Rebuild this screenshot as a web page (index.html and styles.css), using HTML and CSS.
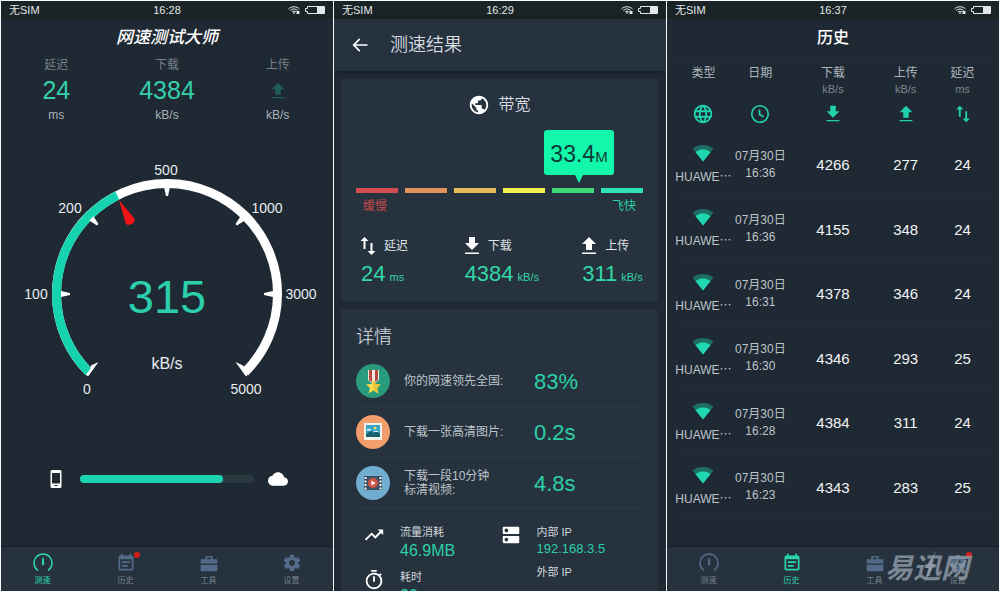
FILE: index.html
```html
<!DOCTYPE html>
<html lang="zh-CN">
<head>
<meta charset="utf-8">
<title>网速测试大师</title>
<meta name="viewport" content="width=device-width, initial-scale=1">
<link rel="stylesheet" href="styles.css">
</head>
<body>
<svg class="sprite" aria-hidden="true">
  <symbol id="i-wifi" viewBox="0 0 24 16"><g fill="none" stroke="currentColor" stroke-width="2"><path d="M1 6C7 0 17 0 23 6M4.500 9C9 5 15 5 19.500 9M8 12c2.500-2 5.500-2 8 0"/></g><path d="M12 16l-2.500-2.500q2.500-1.800 5 0zM17 10h6v6h-6z"/></symbol>
  <symbol id="i-battery" viewBox="0 0 20 8"><path d="M2.500.5h17v7h-17v-2h-2v-3h2z" fill="none" stroke="currentColor"/><path d="M12 1h7.500v6H12z"/></symbol>
  <symbol id="i-up" viewBox="0 0 24 24"><path d="M9 16h6v-6h4l-7-7-7 7h4zM5 18.500h14V20H5z"/></symbol>
  <symbol id="i-down" viewBox="0 0 24 24"><path d="M19 9h-4V3H9v6H5l7 7zM5 18.500V20h14v-1.500z"/></symbol>
  <symbol id="i-swap" viewBox="0 0 24 24"><path d="M16.500 17.010V9h-2v8.010h-3L15.500 21l4-3.990zM8.500 3l-4 3.990h3V15h2V6.990h3z"/></symbol>
  <symbol id="i-phone" viewBox="0 0 12 18"><path fill-rule="evenodd" d="M2 0h8a1.500 1.500 0 0 1 1.500 1.500v15A1.500 1.500 0 0 1 10 18H2a1.500 1.500 0 0 1-1.500-1.500v-15A1.500 1.500 0 0 1 2 0zM2 3v10.500h8V3zM4.500 15v1h3v-1z"/></symbol>
  <symbol id="i-cloud" viewBox="0 0 24 24"><path d="M19.350 10.040C18.670 6.590 15.640 4 12 4 9.110 4 6.600 5.640 5.350 8.040 2.340 8.360 0 10.910 0 14c0 3.310 2.690 6 6 6h13c2.760 0 5-2.240 5-5 0-2.640-2.050-4.780-4.650-4.960z"/></symbol>
  <symbol id="i-gauge" viewBox="0 0 20 20"><path d="M5 17.500A9 9 0 1 1 15 17.500" fill="none" stroke="currentColor" stroke-width="1.500"/><path d="M9.200 5h1.600l.4 6a1.200 1.200 0 0 1-2.400 0z"/></symbol>
  <symbol id="i-note" viewBox="0 0 24 24"><path d="M19 3h-1V1h-2v2H8V1H6v2H5c-1.110 0-2 .9-2 2v14c0 1.100.89 2 2 2h14c1.100 0 2-.9 2-2V5c0-1.100-.9-2-2-2zm0 16H5V7.500h14zM7 10h10v2H7zM7 14.500h7v2H7z"/></symbol>
  <symbol id="i-case" viewBox="0 0 24 24"><path fill-rule="evenodd" d="M2 7.500h5.500V5A1.500 1.500 0 0 1 9 3.500h6A1.500 1.500 0 0 1 16.500 5v2.500H22v5H2zM9.500 5.500v2h5v-2zM2 14h20v8H2z"/></symbol>
  <symbol id="i-gear" viewBox="0 0 24 24"><path d="M19.430 12.980c.04-.32.07-.64.07-.98s-.03-.66-.07-.98l2.110-1.650c.19-.15.24-.42.12-.64l-2-3.460c-.12-.22-.39-.3-.61-.22l-2.490 1c-.52-.4-1.080-.73-1.690-.98l-.38-2.650C14.460 2.180 14.250 2 14 2h-4c-.25 0-.46.18-.49.42l-.38 2.650c-.61.25-1.170.59-1.690.98l-2.490-1c-.23-.09-.49 0-.61.22l-2 3.460c-.13.22-.07.49.12.64l2.110 1.650c-.04.32-.07.65-.07.98s.03.66.07.98l-2.110 1.650c-.19.15-.24.42-.12.64l2 3.460c.12.22.39.3.61.22l2.490-1c.52.4 1.080.73 1.690.98l.38 2.650c.03.24.24.42.49.42h4c.25 0 .46-.18.49-.42l.38-2.650c.61-.25 1.170-.59 1.690-.98l2.490 1c.23.09.49 0 .61-.22l2-3.460c.12-.22.07-.49-.12-.64zM12 15.500c-1.930 0-3.500-1.570-3.500-3.500s1.570-3.500 3.500-3.500 3.500 1.570 3.500 3.500-1.570 3.500-3.500 3.500z"/></symbol>
  <symbol id="i-back" viewBox="0 0 24 24"><path d="M21 11H6.830l5.590-5.590L11 4l-8 8 8 8 1.410-1.410L6.830 13H21z"/></symbol>
  <symbol id="i-earth" viewBox="0 0 24 24"><path d="M12 2C6.480 2 2 6.480 2 12s4.480 10 10 10 10-4.480 10-10S17.520 2 12 2zm-1 17.930c-3.950-.49-7-3.850-7-7.930 0-.62.08-1.210.21-1.790L9 15v1c0 1.100.9 2 2 2zm6.900-2.540c-.26-.81-1-1.390-1.900-1.390h-1v-3c0-.55-.45-1-1-1H8v-2h2c.55 0 1-.45 1-1V7h2c1.100 0 2-.9 2-2v-.41c2.930 1.190 5 4.060 5 7.410 0 2.080-.8 3.970-2.100 5.390z"/></symbol>
  <symbol id="i-globe" viewBox="0 0 24 24"><path d="M12 2C6.470 2 2 6.480 2 12s4.470 10 10 10 10-4.480 10-10S17.520 2 12 2zm6.920 6h-2.950c-.32-1.250-.78-2.450-1.380-3.560 1.840.63 3.370 1.910 4.330 3.560zM12 4.040c.83 1.200 1.480 2.530 1.910 3.960h-3.820c.43-1.430 1.080-2.760 1.910-3.960zM4.260 14C4.100 13.360 4 12.690 4 12s.1-1.360.26-2h3.380c-.08.66-.14 1.320-.14 2s.06 1.340.14 2zm.82 2h2.950c.32 1.250.78 2.450 1.380 3.560-1.840-.63-3.370-1.900-4.330-3.560zm2.950-8H5.080c.96-1.660 2.490-2.930 4.330-3.560C8.810 5.550 8.350 6.750 8.030 8zM12 19.960c-.83-1.200-1.480-2.530-1.910-3.960h3.820c-.43 1.430-1.080 2.760-1.910 3.960zM14.340 14H9.660c-.09-.66-.16-1.320-.16-2s.07-1.350.16-2h4.680c.09.65.16 1.320.16 2s-.07 1.340-.16 2zm.25 5.560c.6-1.110 1.060-2.310 1.380-3.560h2.950c-.96 1.650-2.490 2.930-4.330 3.560zM16.360 14c.08-.66.14-1.320.14-2s-.06-1.340-.14-2h3.380c.16.64.26 1.310.26 2s-.1 1.360-.26 2z"/></symbol>
  <symbol id="i-clock" viewBox="0 0 24 24"><path d="M12 3a9 9 0 1 0 0 18 9 9 0 0 0 0-18zM11.500 7v5.500l4.500 2.500" fill="none" stroke="currentColor" stroke-width="1.800"/></symbol>
  <symbol id="i-signal" viewBox="0 0 24 20"><path opacity=".4" d="M12 19.500L23.640 5C23.190 4.660 18.710 1 12 1S.81 4.660.36 5z"/><path d="M3.530 9L12 19.500 20.470 9C20.040 8.620 16.810 6 12 6S3.960 8.620 3.530 9z"/></symbol>
  <symbol id="i-trend" viewBox="0 0 24 24"><path d="M16 6l2.290 2.290-4.880 4.880-4-4L2 16.590 3.410 18l6-6 4 4 6.300-6.290L22 12V6z"/></symbol>
  <symbol id="i-server" viewBox="0 0 24 24"><path d="M20 13H4c-.55 0-1 .45-1 1v6c0 .55.45 1 1 1h16c.55 0 1-.45 1-1v-6c0-.55-.45-1-1-1zM7 19c-1.100 0-2-.9-2-2s.9-2 2-2 2 .9 2 2-.9 2-2 2zM20 3H4c-.55 0-1 .45-1 1v6c0 .55.45 1 1 1h16c.55 0 1-.45 1-1V4c0-.55-.45-1-1-1zM7 9c-1.100 0-2-.9-2-2s.9-2 2-2 2 .9 2 2-.9 2-2 2z"/></symbol>
  <symbol id="i-timer" viewBox="0 0 24 24"><path d="M15 1H9v2h6zm-4 13h2V8h-2zm8.030-6.610l1.420-1.420c-.43-.51-.9-.99-1.410-1.410l-1.420 1.420C16.070 4.740 14.120 4 12 4c-4.970 0-9 4.030-9 9s4.020 9 9 9 9-4.030 9-9c0-2.120-.74-4.070-1.970-5.610zM12 20c-3.870 0-7-3.130-7-7s3.130-7 7-7 7 3.130 7 7-3.130 7-7 7z"/></symbol>
</svg>

<main class="screens">
  <section class="phone">
    <div class="status"><span>无SIM</span><time>16:28</time><span class="status-icons"><svg class="wifi"><use href="#i-wifi"/></svg><svg class="battery"><use href="#i-battery"/></svg></span></div>
    <h1 class="bar-title bar-title--brand">网速测试大师</h1>
    <dl class="stats">
      <div class="stat"><dt>延迟</dt><dd class="stat-value">24</dd><dd class="stat-unit">ms</dd></div>
      <div class="stat"><dt>下载</dt><dd class="stat-value">4384</dd><dd class="stat-unit">kB/s</dd></div>
      <div class="stat"><dt>上传</dt><dd class="stat-value stat-value--pending"><svg class="icon-22"><use href="#i-up"/></svg></dd><dd class="stat-unit">kB/s</dd></div>
    </dl>
    <svg class="gauge" viewBox="0 0 332 260" role="img" aria-label="315 kB/s">
      <path class="gauge-track" d="M87.900 222.100A110.500 110.500 0 1 1 244.100 222.100"/>
      <path class="gauge-fill" d="M87.900 222.100A110.500 110.500 0 0 1 116.200 45.400"/>
      <g fill="#fff">
        <path d="M60 141l9 2v2l-9 2zM272 141l-9 2v2l9 2zM163 37h6l-2 9h-2z"/>
        <path d="M163 37h6l-2 9h-2z" transform="rotate(45 166 144)"/>
        <path d="M163 37h6l-2 9h-2z" transform="rotate(-45 166 144)"/>
        <path d="M97.500 212l-10.500 14.500-2-2 4-5 1-4zM234.500 212l10.500 14.500 3-3-6-8z"/>
      </g>
      <path d="M118 50l15 18q2 3-2 6l-4 1q-3-1-3-4z" fill="#f21414"/>
      <g class="gauge-label">
        <text x="86" y="244">0</text><text x="35" y="149">100</text><text x="69" y="63">200</text><text x="165" y="25">500</text><text x="266" y="63">1000</text><text x="300" y="149">3000</text><text x="245" y="244">5000</text>
      </g>
      <text class="gauge-value" x="166" y="163">315</text>
      <text class="gauge-unit" x="166" y="219">kB/s</text>
    </svg>
    <div class="transfer">
      <svg class="device"><use href="#i-phone"/></svg>
      <div class="progress" role="progressbar" aria-label="传输" aria-valuenow="82"><div class="progress-fill" style="width:82%"></div></div>
      <svg class="icon-20"><use href="#i-cloud"/></svg>
    </div>
    <nav class="tabs">
      <button class="tab tab--on" type="button"><span class="tab-icon"><svg><use href="#i-gauge"/></svg></span>测速</button>
      <button class="tab" type="button"><span class="tab-icon"><svg><use href="#i-note"/></svg><i class="dot"></i></span>历史</button>
      <button class="tab" type="button"><span class="tab-icon"><svg><use href="#i-case"/></svg></span>工具</button>
      <button class="tab" type="button"><span class="tab-icon"><svg><use href="#i-gear"/></svg></span>设置</button>
    </nav>
  </section>

  <section class="phone">
    <div class="status"><span>无SIM</span><time>16:29</time><span class="status-icons"><svg class="wifi"><use href="#i-wifi"/></svg><svg class="battery"><use href="#i-battery"/></svg></span></div>
    <header class="appbar"><button class="back" type="button" aria-label="返回"><svg class="icon-20"><use href="#i-back"/></svg></button><h1>测速结果</h1></header>
    <div class="cards">
      <section class="card">
        <h2 class="card-head"><svg class="icon-22"><use href="#i-earth"/></svg>带宽</h2>
        <div class="scale">
          <span class="seg seg--1"></span><span class="seg seg--2"></span><span class="seg seg--3"></span><span class="seg seg--4"></span>
          <span class="seg seg--5"><strong class="bubble">33.4<small>M</small></strong></span><span class="seg seg--6"></span>
        </div>
        <div class="scale-ends"><span class="slow">缓慢</span><span class="fast">飞快</span></div>
        <dl class="metrics">
          <div class="metric"><dt><svg><use href="#i-swap"/></svg>延迟</dt><dd>24<small>ms</small></dd></div>
          <div class="metric"><dt><svg><use href="#i-down"/></svg>下载</dt><dd>4384<small>kB/s</small></dd></div>
          <div class="metric"><dt><svg><use href="#i-up"/></svg>上传</dt><dd>311<small>kB/s</small></dd></div>
        </dl>
      </section>
      <section class="card card--details">
        <h2>详情</h2>
        <div class="fact">
          <svg class="badge" viewBox="0 0 34 34"><circle cx="17" cy="17" r="17" fill="#279b7c"/><path d="M12 6h11v10l-5.500 4L12 16z" fill="#f3e8e2"/><path d="M13 6h3v12l-3-2zM19 6h3v10l-3 2z" fill="#b9483f"/><path d="M17.500 15l2 5 5 .5-3.500 3.500 1.500 5.500-5-3-5 3L14 24l-4-3.500 5.500-.5z" fill="#fadd4b"/><path d="M17.500 15l2 5 5 .5-3.500 3.500 1.500 5.500-5-3z" fill="#e9c53a"/></svg>
          <p>你的网速领先全国:</p><output>83%</output>
        </div>
        <div class="fact">
          <svg class="badge" viewBox="0 0 34 34"><circle cx="17" cy="17" r="17" fill="#f29e6c"/><path d="M8 8h18v17H8z" fill="#f6f3ec"/><path d="M10 10h14v12H10z" fill="#38a5c6"/><path d="M10 19l5-3 3 2 3-2 3 3v3H10z" fill="#185f70"/><circle cx="19" cy="13" r="1.500" fill="#f3e16c"/><path d="M11 14h4v1.500h-4zM18 16h4v1h-4z" fill="#e9f5f5"/></svg>
          <p>下载一张高清图片:</p><output>0.2s</output>
        </div>
        <div class="fact">
          <svg class="badge" viewBox="0 0 34 34"><circle cx="17" cy="17" r="17" fill="#71add1"/><path d="M8 10h18v14H8z" fill="#34495c"/><path d="M9.500 11v13M24.500 11v13" stroke="#fff" stroke-width="2" stroke-dasharray="2 1.500"/><path d="M11.500 10.500h11v13h-11z" fill="#3e5367"/><circle cx="17" cy="17" r="5" fill="#cf5347"/><path d="M15.500 14.500l4 2.500-4 2.500z" fill="#fff"/></svg>
          <p>下载一段10分钟<br>标清视频:</p><output>4.8s</output>
        </div>
        <div class="extras">
          <div class="extra-column">
            <div class="extra"><svg class="icon-22"><use href="#i-trend"/></svg><dl><dt>流量消耗</dt><dd>46.9MB</dd></dl></div>
            <div class="extra"><svg class="icon-22"><use href="#i-timer"/></svg><dl><dt>耗时</dt><dd>20s</dd></dl></div>
          </div>
          <div class="extra extra--ip"><svg class="icon-22"><use href="#i-server"/></svg><dl><dt>内部 IP</dt><dd>192.168.3.5</dd><dt>外部 IP</dt></dl></div>
        </div>
      </section>
    </div>
  </section>

  <section class="phone">
    <div class="status"><span>无SIM</span><time>16:37</time><span class="status-icons"><svg class="wifi"><use href="#i-wifi"/></svg><svg class="battery"><use href="#i-battery"/></svg></span></div>
    <h1 class="bar-title">历史</h1>
    <div class="log">
      <table>
        <colgroup><col class="c-type"><col class="c-date"><col class="c-down"><col class="c-up"><col class="c-ping"></colgroup>
        <thead><tr>
          <th scope="col">类型<small>&nbsp;</small><svg><use href="#i-globe"/></svg></th>
          <th scope="col">日期<small>&nbsp;</small><svg><use href="#i-clock"/></svg></th>
          <th scope="col">下载<small>kB/s</small><svg><use href="#i-down"/></svg></th>
          <th scope="col">上传<small>kB/s</small><svg><use href="#i-up"/></svg></th>
          <th scope="col">延迟<small>ms</small><svg><use href="#i-swap"/></svg></th>
        </tr></thead>
        <tbody>
          <tr><td class="net"><svg><use href="#i-signal"/></svg>HUAWE<span class="more">…</span></td><td class="when">07月30日<br>16:36</td><td>4266</td><td>277</td><td>24</td></tr>
          <tr><td class="net"><svg><use href="#i-signal"/></svg>HUAWE<span class="more">…</span></td><td class="when">07月30日<br>16:36</td><td>4155</td><td>348</td><td>24</td></tr>
          <tr><td class="net"><svg><use href="#i-signal"/></svg>HUAWE<span class="more">…</span></td><td class="when">07月30日<br>16:31</td><td>4378</td><td>346</td><td>24</td></tr>
          <tr><td class="net"><svg><use href="#i-signal"/></svg>HUAWE<span class="more">…</span></td><td class="when">07月30日<br>16:30</td><td>4346</td><td>293</td><td>25</td></tr>
          <tr><td class="net"><svg><use href="#i-signal"/></svg>HUAWE<span class="more">…</span></td><td class="when">07月30日<br>16:28</td><td>4384</td><td>311</td><td>24</td></tr>
          <tr><td class="net"><svg><use href="#i-signal"/></svg>HUAWE<span class="more">…</span></td><td class="when">07月30日<br>16:23</td><td>4343</td><td>283</td><td>25</td></tr>
        </tbody>
      </table>
    </div>
    <nav class="tabs">
      <button class="tab" type="button"><span class="tab-icon"><svg><use href="#i-gauge"/></svg></span>测速</button>
      <button class="tab tab--on" type="button"><span class="tab-icon"><svg><use href="#i-note"/></svg></span>历史</button>
      <button class="tab" type="button"><span class="tab-icon"><svg><use href="#i-case"/></svg></span>工具</button>
      <button class="tab" type="button"><span class="tab-icon"><svg><use href="#i-gear"/></svg><i class="dot"></i></span>设置</button>
    </nav>
    <div class="watermark">易迅网<svg viewBox="0 0 16 34"><path d="M14 1L3 18h4L2 33 13 14H9z"/></svg></div>
  </section>
</main>
</body>
</html>
```
FILE: styles.css
```css
:root {
  --bg: #1f2933;
  --panel: #26323e;
  --teal: #21d1ad;
  --text: #bdc4ca;
}

* {
  box-sizing: border-box;
  margin: 0;
  padding: 0;
}

body {
  background: #f4fbfa;
  color: var(--text);
  font-family: "Liberation Sans", "Noto Sans CJK SC", sans-serif;
  font-size: 12px;
  font-weight: 400;
}

h1, h2 { font-weight: 350; }
svg { display: block; fill: currentColor; flex: none; }
button { border: 0; background: none; color: inherit; font: inherit; cursor: pointer; }
small { font-size: 12px; }

.sprite { position: absolute; width: 0; height: 0; }
.icon-20 { width: 20px; height: 20px; }
.icon-22 { width: 22px; height: 22px; }

.screens {
  display: grid;
  grid-template-columns: repeat(3, minmax(0, 1fr));
  gap: 1px;
  height: 100vh;
  padding: 1px;
}

.phone {
  position: relative;
  display: flex;
  flex-direction: column;
  min-height: 0;
  overflow: hidden;
  background: var(--bg);
}

/* Status bar */
.status {
  display: grid;
  grid-template-columns: 1fr auto 1fr;
  align-items: center;
  flex: none;
  height: 18px;
  padding: 0 8px;
  background: #1a2326;
  color: #e2e7e8;
  font-size: 11px;
  line-height: 16px;
}
.status-icons { display: flex; align-items: center; justify-content: flex-end; gap: 5px; }
.wifi { width: 12px; height: 8px; }
.battery { width: 20px; height: 8px; }

.bar-title {
  flex: none;
  color: #fff;
  font-size: 16px;
  font-weight: 500;
  line-height: 38px;
  text-align: center;
}
.bar-title--brand { font-size: 17px; font-style: italic; }

/* Speed test */
.stats { display: grid; grid-template-columns: repeat(3, 1fr); text-align: center; }
.stat dt { color: #75808a; line-height: 16px; }
.stat-value { color: #35cfac; font-size: 25px; line-height: 35px; }
.stat-value--pending { display: grid; place-items: center; height: 35px; color: #1f5c58; }
.stat-unit { color: #a9b1b8; line-height: 14px; }

.gauge { width: 100%; margin-top: 28px; color: #fff; }
.gauge-track { fill: none; stroke: #fff; stroke-width: 9px; }
.gauge-fill { fill: none; stroke: #14d3ae; stroke-width: 9px; }
.gauge text { text-anchor: middle; }
.gauge-label { font-size: 14px; fill: #e8ecee; }
.gauge-value { font-size: 47px; fill: #2bcfac; }
.gauge-unit { font-size: 16px; fill: #e8ecee; }

.transfer { display: flex; align-items: center; gap: 14px; margin-top: 59px; padding: 0 45px 0 49px; }
.device { width: 12px; height: 18px; margin-right: 4px; color: #fff; }
.transfer .icon-20 { color: #fff; }
.progress { flex: 1; height: 8px; border-radius: 4px; background: #2a3840; }
.progress-fill { height: 100%; border-radius: 4px; background: #1bd3ae; }

/* Bottom tabs */
.tabs {
  display: grid;
  grid-template-columns: repeat(4, 1fr);
  flex: none;
  height: 44px;
  margin-top: auto;
  background: var(--panel);
  box-shadow: 0 -1px 1px #19222a;
}
.tab {
  display: flex;
  flex-direction: column;
  align-items: center;
  padding-top: 6px;
  color: #74808b;
  font-size: 8px;
  line-height: 15px;
}
.tab-icon { position: relative; color: #536b89; }
.tab-icon svg { width: 20px; height: 20px; }
.tab--on, .tab--on .tab-icon { color: #2bd3af; }
.dot { position: absolute; top: -1px; right: -4px; width: 6px; height: 6px; border-radius: 50%; background: #d51f16; }

/* Results */
.appbar {
  display: flex;
  align-items: center;
  gap: 20px;
  flex: none;
  height: 52px;
  padding: 0 16px;
  background: var(--panel);
  box-shadow: 0 1px 4px #151d24;
  color: #fff;
}
.appbar h1 { color: #d8dde1; font-size: 18px; line-height: 24px; }

.cards { display: grid; gap: 7px; padding: 8px 8px 0 7px; }
.card { padding: 14px 15px 12px; border-radius: 3px; background: var(--panel); }
.card-head { display: flex; align-items: center; justify-content: center; gap: 8px; color: #d8dde1; font-size: 16px; line-height: 24px; }
.card-head svg { color: #fff; }

.scale { display: grid; grid-template-columns: repeat(6, 1fr); gap: 7px; margin-top: 71px; }
.seg { position: relative; height: 5px; }
.seg--1 { background: #d24c50; }
.seg--2 { background: #e0935a; }
.seg--3 { background: #e6bd58; }
.seg--4 { background: #f3ef4d; }
.seg--5 { background: #3fd876; }
.seg--6 { background: #2fe2b3; }
.bubble {
  position: absolute;
  bottom: 18px;
  left: -8px;
  width: 70px;
  height: 45px;
  padding-top: 4px;
  border-radius: 3px;
  background: #12f7a9;
  color: #0d3b38;
  font-size: 23px;
  font-weight: 400;
  line-height: 41px;
  text-align: center;
}
.bubble small { font-size: 15px; line-height: 1; }
.bubble::after {
  content: "";
  position: absolute;
  top: 100%;
  left: 31px;
  border: 4px solid transparent;
  border-top: 8px solid #12f7a9;
  border-bottom: 0;
}

.scale-ends { display: flex; justify-content: space-between; padding: 4px 7px; line-height: 18px; }
.slow { color: #cc4a4d; }
.fast { color: #2bd0a4; }

.metrics { display: grid; grid-template-columns: 104fr 118fr 61fr; margin-top: 15px; padding-left: 5px; }
.metric dt { display: flex; align-items: center; gap: 4px; color: #dde2e5; line-height: 24px; }
.metric dt svg { width: 24px; height: 24px; margin-left: -5px; color: #fff; }
.metric dd { color: #33d7a8; font-size: 22px; line-height: 32px; white-space: nowrap; }
.metric small { margin-left: 4px; font-size: 11px; line-height: 1; }

.card--details { padding-bottom: 0; }
.card--details h2 { margin-bottom: 5px; color: #bcc3ca; font-size: 18px; line-height: 28px; }
.fact {
  display: grid;
  grid-template-columns: 34px 116px 1fr;
  column-gap: 14px;
  align-items: center;
  height: 51px;
  border-bottom: 1px solid #223e4b;
}
.badge { width: 34px; height: 34px; }
.fact p { line-height: 14px; white-space: nowrap; }
.fact output { padding-top: 2px; color: #2cd0a6; font-size: 22px; }

.extras { display: grid; grid-template-columns: 137fr 144fr; padding: 15px 0 0 7px; }
.extra-column { display: grid; align-content: start; gap: 7px; }
.extra { display: flex; gap: 15px; font-size: 11px; line-height: 16px; }
.extra svg { color: #fff; }
.extra dt { color: #d3d8dc; }
.extra dd { color: #2cd0a6; font-size: 16px; line-height: 22px; }
.extra--ip dd { margin-bottom: 6px; font-size: 13px; line-height: 18px; }

/* History */
.log { flex: 1; display: grid; min-height: 0; padding: 7px 8px 27px; border-top: 1px solid #232e38; }
table { width: 100%; height: 100%; border-collapse: collapse; table-layout: fixed; text-align: center; }
.c-type, .c-date, .c-up { width: 18%; }
.c-down { width: 28%; }
.c-ping { width: 18%; }
thead tr { height: 68px; }
th { vertical-align: top; color: #aeb6bd; font-weight: 400; line-height: 16px; }
th small { display: block; color: #7c868f; font-size: 11px; line-height: 16px; }
th svg { width: 22px; height: 22px; margin: 6px auto 0; color: var(--teal); }
td { border-bottom: 1px solid #222e37; color: #f2f4f5; font-size: 15px; }
td.net, td.when { color: var(--text); font-size: 12px; line-height: 17px; }
td.net { white-space: nowrap; }
td.net svg { width: 22px; height: 18px; margin: 0 auto 5px; color: #1fd8b1; }
.more { font-family: "Noto Sans CJK SC", sans-serif; }

.watermark {
  position: absolute;
  right: 30px;
  bottom: 2px;
  color: rgba(148, 160, 171, 0.8);
  font-size: 28px;
  font-style: italic;
  font-weight: 700;
  line-height: 40px;
  pointer-events: none;
}
.watermark svg { position: absolute; top: 1px; left: 37px; width: 16px; height: 34px; }
```
